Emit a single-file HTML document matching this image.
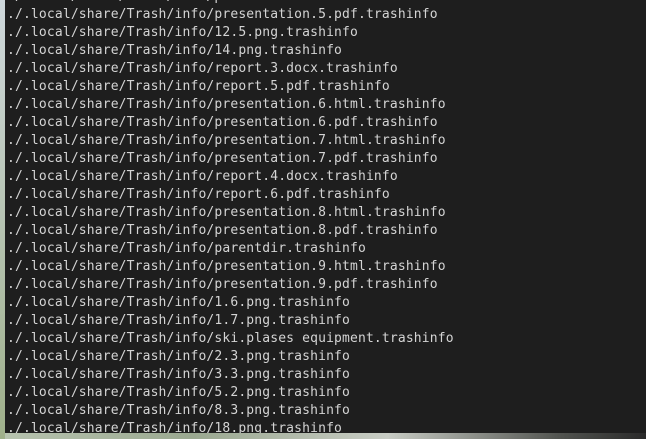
<!DOCTYPE html><html><head><style>
body{margin:0;width:646px;height:439px;overflow:hidden;background:linear-gradient(90deg,#b8c4b0,#9aa890 30%,#c8ccc4 60%,#50524e 87%,#2a2a2a);position:relative}
#t{position:absolute;left:5px;top:0;width:641px;height:433px;background:#1e1e1e;overflow:hidden}
#w{position:absolute;left:0;top:0;width:5px;height:439px;background:linear-gradient(#cfd8dc,#9fb08a)}
pre{margin:0;position:absolute;left:2px;top:-12px;font-family:"DejaVu Sans Mono",monospace;font-size:13px;letter-spacing:0.15px;line-height:18px;color:#d4d4d4}
</style></head><body><div id="w"></div><div id="t"><pre>./.local/share/Trash/info/presentation.5.html.trashinfo
./.local/share/Trash/info/presentation.5.pdf.trashinfo
./.local/share/Trash/info/12.5.png.trashinfo
./.local/share/Trash/info/14.png.trashinfo
./.local/share/Trash/info/report.3.docx.trashinfo
./.local/share/Trash/info/report.5.pdf.trashinfo
./.local/share/Trash/info/presentation.6.html.trashinfo
./.local/share/Trash/info/presentation.6.pdf.trashinfo
./.local/share/Trash/info/presentation.7.html.trashinfo
./.local/share/Trash/info/presentation.7.pdf.trashinfo
./.local/share/Trash/info/report.4.docx.trashinfo
./.local/share/Trash/info/report.6.pdf.trashinfo
./.local/share/Trash/info/presentation.8.html.trashinfo
./.local/share/Trash/info/presentation.8.pdf.trashinfo
./.local/share/Trash/info/parentdir.trashinfo
./.local/share/Trash/info/presentation.9.html.trashinfo
./.local/share/Trash/info/presentation.9.pdf.trashinfo
./.local/share/Trash/info/1.6.png.trashinfo
./.local/share/Trash/info/1.7.png.trashinfo
./.local/share/Trash/info/ski.plases equipment.trashinfo
./.local/share/Trash/info/2.3.png.trashinfo
./.local/share/Trash/info/3.3.png.trashinfo
./.local/share/Trash/info/5.2.png.trashinfo
./.local/share/Trash/info/8.3.png.trashinfo
./.local/share/Trash/info/18.png.trashinfo</pre></div></body></html>
